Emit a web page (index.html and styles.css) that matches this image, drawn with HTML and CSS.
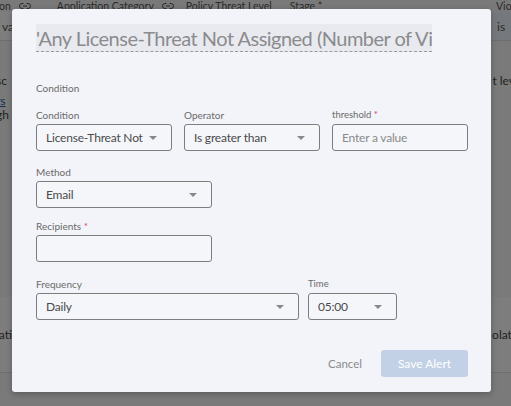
FILE: index.html
```html
<!DOCTYPE html>
<html lang="en">
<head>
    <meta charset="UTF-8">
    <meta name="viewport" content="width=device-width, initial-scale=1.0">
    <title>Save Alert</title>
    <link rel="stylesheet" href="styles.css">
</head>
<body>
    <!-- page behind the dialog -->
    <div class="page">
        <div class="table-head">
            <span class="th th-first">on <svg class="link-icon" viewBox="0 0 12 8"><path d="M4.5 1.5H3a2.5 2.5 0 0 0 0 5h1.5M7.5 1.5H9a2.5 2.5 0 0 1 0 5H7.5M4 4h4" fill="none" stroke="currentColor" stroke-width="1"/></svg></span>
            <span class="th th-cat">Application Category <svg class="link-icon" viewBox="0 0 12 8"><path d="M4.5 1.5H3a2.5 2.5 0 0 0 0 5h1.5M7.5 1.5H9a2.5 2.5 0 0 1 0 5H7.5M4 4h4" fill="none" stroke="currentColor" stroke-width="1"/></svg></span>
            <span class="th th-level">Policy Threat Level</span>
            <span class="th th-stage">Stage *</span>
            <span class="th th-viol">Violat</span>
        </div>
        <div class="table-row">
            <span class="cell-left">r va</span>
            <span class="cell-right">is</span>
        </div>
        <div class="page-body">
            <div class="body-line"><span>sc</span><span class="right-text">t lev</span></div>
            <div class="body-line link-line"><span class="page-link">rs</span></div>
            <div class="body-line"><span>gh</span></div>
        </div>
        <div class="page-band">
            <div class="body-line"><span>lati</span><span class="right-text">olati</span></div>
        </div>
    </div>

    <div class="overlay">
        <div class="modal">
            <div class="title-field">
                <span class="title-text">'Any License-Threat Not Assigned (Number of Violations)'</span>
            </div>

            <div class="section-label">Condition</div>

            <div class="form-row row-condition">
                <div class="field w-third">
                    <label class="field-label">Condition</label>
                    <div class="select"><span>License-Threat Not</span><i class="caret"></i></div>
                </div>
                <div class="field w-third">
                    <label class="field-label">Operator</label>
                    <div class="select"><span>Is greater than</span><i class="caret"></i></div>
                </div>
                <div class="field w-third">
                    <label class="field-label small">threshold <b class="req">*</b></label>
                    <div class="input"><span class="placeholder">Enter a value</span></div>
                </div>
            </div>

            <div class="form-row row-method">
                <div class="field w-half">
                    <label class="field-label">Method</label>
                    <div class="select"><span>Email</span><i class="caret"></i></div>
                </div>
            </div>

            <div class="form-row row-recipients">
                <div class="field w-half">
                    <label class="field-label">Recipients <b class="req">*</b></label>
                    <div class="input"></div>
                </div>
            </div>

            <div class="form-row row-frequency">
                <div class="field w-freq">
                    <label class="field-label">Frequency</label>
                    <div class="select"><span>Daily</span><i class="caret"></i></div>
                </div>
                <div class="field w-time">
                    <label class="field-label small">Time</label>
                    <div class="select"><span>05:00</span><i class="caret"></i></div>
                </div>
            </div>

            <div class="actions">
                <button class="btn-cancel">Cancel</button>
                <button class="btn-save" disabled>Save Alert</button>
            </div>
        </div>
    </div>
</body>
</html>
```

FILE: styles.css
```css
* {
    box-sizing: border-box;
}

body {
    margin: 0;
    font-family: 'Lato', 'Liberation Sans', sans-serif;
    background-color: #f4f4f4;
    color: #333;
    height: 406px;
    overflow: hidden;
}

/* background page */
.page {
    height: 406px;
    font-size: 10.5px;
    overflow: hidden;
}

.table-head {
    display: flex;
    height: 12px;
    line-height: 10px;
    color: #555;
    background-color: #f2f2f2;
    white-space: nowrap;
    overflow: hidden;
}

.th {
    display: inline-flex;
    align-items: center;
    gap: 8px;
}

.th-first {
    margin-left: -1px;
}

.th-cat {
    margin-left: 26px;
}

.th-level {
    margin-left: 12px;
}

.th-stage {
    margin-left: 18px;
}

.th-viol {
    margin-left: auto;
    margin-right: -12px;
}

.link-icon {
    width: 12px;
    height: 8px;
}

.table-row {
    display: flex;
    justify-content: space-between;
    height: 29px;
    align-items: center;
    background-color: #fdfdfd;
    border-bottom: 1px solid #ddd;
    font-size: 12px;
    color: #555;
    white-space: nowrap;
}

.cell-left {
    margin-left: -5px;
}

.cell-right {
    height: 100%;
    width: 21px;
    padding-left: 7px;
    display: flex;
    align-items: center;
    background-color: #eaf0f8;
}

.page-body {
    padding-top: 32px;
    height: 256px;
    font-size: 12px;
    color: #444;
}

.body-line {
    display: flex;
    justify-content: space-between;
    height: 18px;
    margin-left: -4px;
    margin-right: -4px;
    white-space: nowrap;
}

.link-line {
    height: 14px;
    margin-top: 2px;
}

.page-link {
    color: #1f5fa8;
    text-decoration: underline;
}

.page-band {
    padding-top: 30px;
    height: 76px;
    background-color: #fbfbfb;
    border-bottom: 1px solid #ddd;
    font-size: 12px;
    color: #444;
}

/* dialog */
.overlay {
    position: absolute;
    inset: 0;
    background-color: rgba(0, 0, 0, 0.5);
}

.modal {
    position: absolute;
    left: 12px;
    top: 9px;
    width: 479px;
    height: 383px;
    padding: 15px 23px 15px 24px;
    background-color: #f3f4f9;
    border-radius: 3px;
    box-shadow: 0 2px 6px rgba(0, 0, 0, 0.25);
    display: flex;
    flex-direction: column;
}

.title-field {
    width: 396px;
    height: 28px;
    background-color: #e9eaef;
    border-bottom: 1px dashed #9a9a9a;
    overflow: hidden;
    white-space: nowrap;
}

.title-text {
    display: block;
    font-size: 20px;
    line-height: 28px;
    letter-spacing: -0.52px;
    color: #8b8b8d;
}

.section-label {
    margin-top: 29px;
    font-size: 10px;
    line-height: 14px;
    color: #6a6a6a;
}

.form-row {
    display: flex;
    gap: 12px;
}

.row-condition {
    margin-top: 13px;
}

.row-method {
    margin-top: 14px;
}

.row-recipients {
    margin-top: 11px;
}

.row-frequency {
    margin-top: 15px;
}

.field {
    display: flex;
    flex-direction: column;
}

.w-third {
    width: 136px;
}

.w-half {
    width: 176px;
}

.w-freq {
    width: 263px;
}

.w-time {
    width: 89px;
    margin-left: -3px;
}

.field-label {
    font-size: 10px;
    line-height: 14px;
    color: #6a6a6a;
    margin-bottom: 2px;
}

.field-label.small {
    font-size: 9.5px;
}

.req {
    color: #d9455f;
    font-weight: normal;
}

.select,
.input {
    height: 27px;
    border: 1px solid #7d7d7d;
    border-radius: 3px;
    background-color: #f5f6fa;
    display: flex;
    align-items: center;
    padding: 0 14px 0 9px;
    font-size: 12px;
    letter-spacing: -0.2px;
    color: #4a4a4a;
    white-space: nowrap;
}

.select span {
    flex: 1;
    overflow: hidden;
    margin-right: 4px;
}

.placeholder {
    color: #8a8a8a;
}

.caret {
    flex-shrink: 0;
    width: 0;
    height: 0;
    border-left: 4px solid transparent;
    border-right: 4px solid transparent;
    border-top: 4px solid #888;
}

.actions {
    margin-top: auto;
    display: flex;
    justify-content: flex-end;
    align-items: center;
    gap: 19px;
}

.btn-cancel {
    border: none;
    background: none;
    font-family: inherit;
    font-size: 11.5px;
    color: #8a8a8a;
    padding: 0;
}

.btn-save {
    width: 87px;
    height: 27px;
    border: none;
    border-radius: 3px;
    background-color: #c2d1e6;
    color: #fff;
    font-family: inherit;
    font-size: 12px;
}
```
